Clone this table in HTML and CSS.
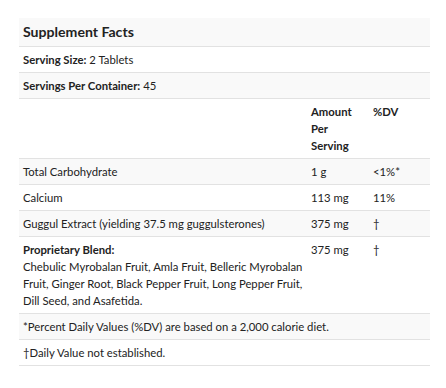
FILE: index.html
```html
<!DOCTYPE html>
<html>
<head>
<meta charset="utf-8">
<link rel="stylesheet" href="styles.css">
</head>
<body>
<div class="wrap">
<table class="facts">
  <colgroup><col class="c-name"><col class="c-amt"><col class="c-dv"></colgroup>
  <tr class="shade"><th colspan="3" class="title">Supplement Facts</th></tr>
  <tr><td colspan="3"><b>Serving Size:</b> 2 Tablets</td></tr>
  <tr class="shade"><td colspan="3"><b>Servings Per Container:</b> 45</td></tr>
  <tr><td></td><th class="hd">Amount Per Serving</th><th class="hd">%DV</th></tr>
  <tr class="shade"><td>Total Carbohydrate</td><td>1 g</td><td>&lt;1%*</td></tr>
  <tr><td>Calcium</td><td>113 mg</td><td>11%</td></tr>
  <tr class="shade"><td>Guggul Extract (yielding 37.5 mg guggulsterones)</td><td>375 mg</td><td>†</td></tr>
  <tr><td><b>Proprietary Blend:</b><br>Chebulic Myrobalan Fruit, Amla Fruit, Belleric Myrobalan Fruit, Ginger Root, Black Pepper Fruit, Long Pepper Fruit, Dill Seed, and Asafetida.</td><td>375 mg</td><td>†</td></tr>
  <tr class="shade"><td colspan="3">*Percent Daily Values (%DV) are based on a 2,000 calorie diet.</td></tr>
  <tr><td colspan="3">†Daily Value not established.</td></tr>
</table>
</div>
</body>
</html>
```
FILE: styles.css
```css
html, body { margin: 0; padding: 0; background: #fff; }
body { font-family: Lato, "Open Sans", sans-serif; color: #222; font-size: 11.3px; }
.wrap { padding: 18px 16px 0 19px; }
.facts { border-collapse: collapse; width: 411px; table-layout: fixed; }
.c-name { width: 288px; }
.c-amt { width: 62px; }
.c-dv { width: 61px; }
.facts td, .facts th { padding: 4px 4px; line-height: 17px; text-align: left; vertical-align: top; border-bottom: 1px solid #e2e2e2; font-weight: normal; }
.facts b { font-weight: bold; }
.shade { background: #f9f9f9; }
.facts th.title { font-size: 14.1px; font-weight: bold; line-height: 20px; padding: 4px 4px 4px 4px; }
.facts th.hd { font-weight: bold; }
```
